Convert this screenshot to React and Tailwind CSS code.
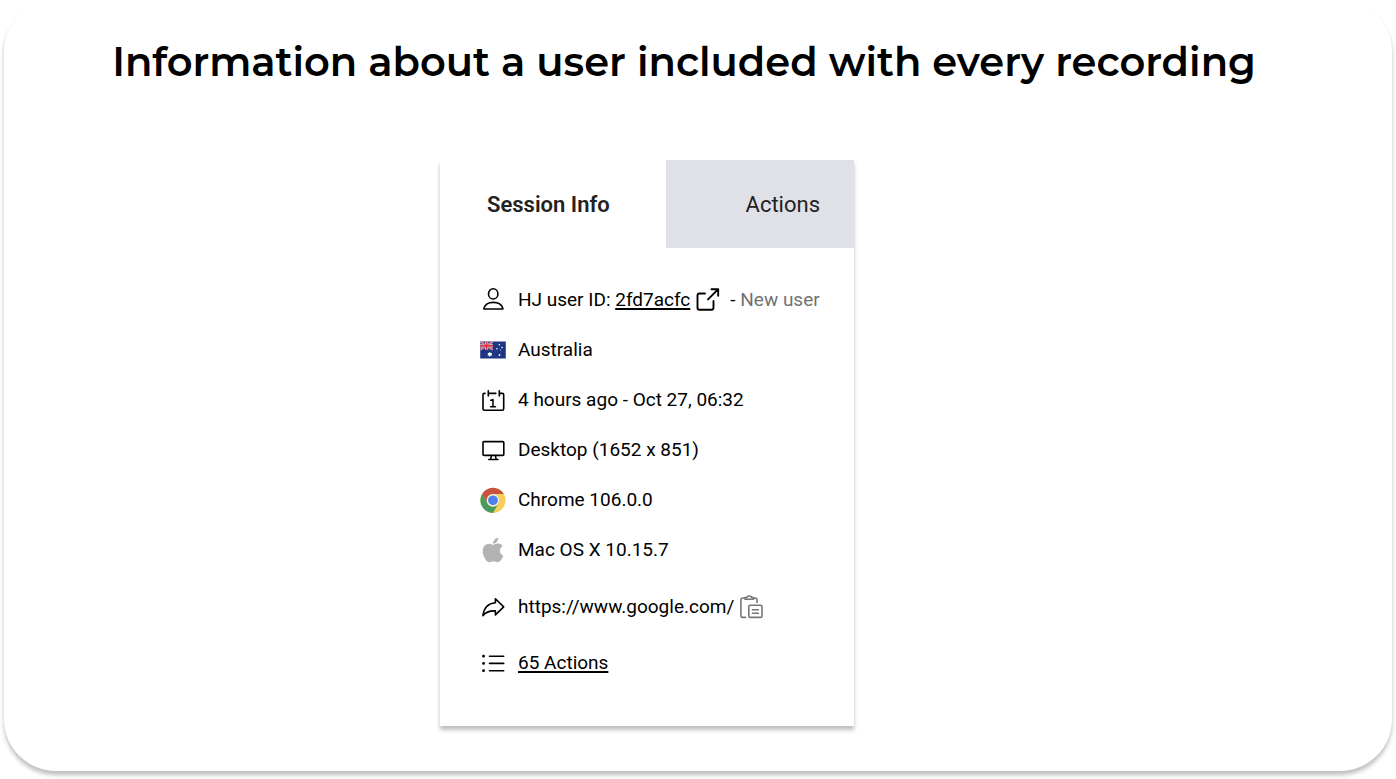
import { FaApple } from "react-icons/fa";

function Icon({ children, color = "text-black" }) {
  return (
    <svg
      viewBox="0 0 26 26"
      aria-hidden="true"
      className={`size-[26px] shrink-0 ${color}`}
      fill="none"
      stroke="currentColor"
      strokeWidth="1.6"
      strokeLinecap="round"
      strokeLinejoin="round"
    >
      {children}
    </svg>
  );
}

const UserIcon = () => (
  <Icon>
    <ellipse cx="13.2" cy="6.9" rx="4.7" ry="5.1" />
    <path d="M3.9 22v-.6C5 17.600 8.700 15.400 13.200 15.400S21.800 17.600 22.900 21.400v.6Z" />
  </Icon>
);

const FlagIcon = () => (
  <Icon>
    <g stroke="none">
      <path fill="#1e3584" d="M.2 4.500h25.600v17H.2z" />
      <path stroke="#e8b9c4" strokeWidth="1.800" strokeLinecap="butt" d="m.4 4.700 12.400 8M12.800 4.700l-12.400 8" />
      <path stroke="#e8c9d2" strokeWidth="3.200" strokeLinecap="butt" d="M6.600 4.500v8.600M.2 8.800h12.800" />
      <path stroke="#d33a4c" strokeWidth="1.700" strokeLinecap="butt" d="M6.600 4.500v8.600M.2 8.800h12.800" />
      <path stroke="#d33a4c" strokeWidth=".7" strokeLinecap="butt" d="m.4 4.700 12.400 8M12.800 4.700l-12.400 8" />
      <g fill="#fff">
        <path d="m9.800 14.800.8 1.300 1.600-.2-.8 1.400.8 1.400-1.600-.2-.8 1.400-.8-1.400-1.600.2.8-1.400-.8-1.400 1.600.2z" />
        <circle cx="19.400" cy="7.700" r=".8" />
        <circle cx="16.900" cy="11.700" r=".8" />
        <circle cx="22" cy="10.500" r=".8" />
        <circle cx="19.500" cy="18" r=".9" />
        <circle cx="20.700" cy="13.100" r=".5" />
      </g>
    </g>
  </Icon>
);

const CalendarIcon = () => (
  <Icon>
    <path d="M5 6.400H4.300Q3 6.400 3 7.700v14Q3 23.300 4.600 23.300h17.600Q23.700 23.300 23.700 21.700v-14Q23.700 6.400 22.400 6.400H19.400M8.300 6.400h7.500M8.300 3.700V9M19.300 3.700V9" />
    <path strokeWidth="1.500" d="M10.800 13.200 13 12.600v7.200M10.600 19.800h4.900" />
  </Icon>
);

const MonitorIcon = () => (
  <Icon>
    <rect x="3" y="4.600" width="20.800" height="13.800" rx="1" />
    <path d="M11.300 18.600c0 2-.3 3.300-1.300 3.900M15.500 18.600c0 2 .3 3.300 1.300 3.900M8.800 22.500h9.200" />
  </Icon>
);

const ChromeIcon = () => (
  <Icon>
    <g stroke="none">
      <circle cx="13" cy="13.300" r="12.600" fill="#f6cf5a" />
      <path fill="#c95140" d="M2.100 7A12.600 12.600 0 0 1 23.900 7H13a6.300 6.300 0 0 0-5.500 9.400z" />
      <path fill="#459a5f" d="M2.100 7A12.600 12.600 0 0 0 13 25.900l5.500-9.400A6.300 6.300 0 0 1 7.500 16.400z" />
      <circle cx="13" cy="13.300" r="6.100" fill="#f5f5f5" />
      <circle cx="13" cy="13.300" r="4.900" fill="#4d82ea" />
    </g>
  </Icon>
);

const ShareIcon = () => (
  <Icon>
    <path d="M15.400 4.700 23.700 12.900 15.400 20.900V16.900C9.500 16.600 5.600 18 2.900 21.700 3.900 14 8 9.200 15.400 8.700Z" />
  </Icon>
);

const ListIcon = () => (
  <Icon>
    <path d="M9.500 6.200h14.200M9.500 13.400h14.200M9.500 20.700h14.200" />
    <path strokeWidth="2.800" d="M3.500 6.200h.1M3.500 13.400h.1M3.500 20.700h.1" />
  </Icon>
);

const ExternalIcon = () => (
  <Icon>
    <path strokeWidth="1.900" d="M11 6.500H5.500Q3.500 6.500 3.500 8.500v12.300q0 2 2 2h12q2 0 2-2V14M17.500 2.200h6.700v6.600M24 2.400 14 12.400" />
  </Icon>
);

const PasteIcon = () => (
  <Icon color="text-[#777777]">
    <path d="M7.500 23.400H4.900Q2.900 23.400 2.900 21.400V6Q2.900 4 4.900 4H7M15.600 4h1.600q1.800 0 1.800 2v2.500M7 5.300V3.500h1.800Q9.200 2 11.300 2t2.500 1.500h1.800v1.800ZM12.200 11.200h10.400q1.400 0 1.400 1.400v9.400q0 1.400-1.400 1.400H12.200q-1.400 0-1.400-1.400v-9.400q0-1.400 1.400-1.400ZM14.400 15.700h6M14.400 19.200h6" />
  </Icon>
);

function Row({ icon, tall, children }) {
  return (
    <li className={`flex items-center gap-3 ${tall ? "h-14" : "h-[50px]"}`}>
      {icon}
      <div className="flex items-center whitespace-nowrap">{children}</div>
    </li>
  );
}

const link = "underline decoration-2 underline-offset-2";

export default function App() {
  return (
    <div className="min-h-screen bg-white px-1 pb-2 font-['Roboto','Liberation_Sans',sans-serif]">
      <main className="flex min-h-[771px] flex-col items-center rounded-[52px] bg-white pt-8 pb-[45px] shadow-[0_4px_4px_rgba(0,0,0,0.25)]">
        <h1 className="pr-7 text-center font-['Montserrat','Inter',sans-serif] text-[40px] leading-[60px] font-semibold text-black">
          Information about a user included with every recording
        </h1>
        <div className="mt-[68px] flex w-full justify-center pr-[102px]">
          <section className="w-full max-w-[414px] bg-white shadow-[0_4px_4px_rgba(0,0,0,0.25)]">
            <div role="tablist" className="flex h-[88px] text-[22px] text-[#222222]">
              <button
                type="button"
                role="tab"
                aria-selected="true"
                className="flex-1 pl-[47px] text-left font-semibold"
              >
                Session Info
              </button>
              <button
                type="button"
                role="tab"
                aria-selected="false"
                className="w-[188px] bg-[#e0e1e6] pr-[34px] text-right"
              >
                Actions
              </button>
            </div>
            <div role="tabpanel" className="px-10 pt-[27px] pb-[35px] text-[19px] leading-6 text-black">
              <ul>
                <Row icon={<UserIcon />}>
                  <span>HJ user ID:&nbsp;</span>
                  <a href="#user" className={link}>2fd7acfc</a>
                  <a href="#open" aria-label="Open user" className="ml-1">
                    <ExternalIcon />
                  </a>
                  <span className="ml-[10px]">-&nbsp;</span>
                  <span className="text-[#727272]">New user</span>
                </Row>
                <Row icon={<FlagIcon />}>Australia</Row>
                <Row icon={<CalendarIcon />}>4 hours ago - Oct 27, 06:32</Row>
                <Row icon={<MonitorIcon />}>Desktop (1652 x 851)</Row>
                <Row icon={<ChromeIcon />}>Chrome 106.0.0</Row>
                <Row icon={<FaApple aria-hidden="true" className="h-7 w-[26px] shrink-0 text-[#b3b3b3]" />}>
                  Mac OS X 10.15.7
                </Row>
              </ul>
              <ul className="pt-1">
                <Row tall icon={<ShareIcon />}>
                  <span>https://www.google.com/</span>
                  <button type="button" aria-label="Copy URL" className="ml-1">
                    <PasteIcon />
                  </button>
                </Row>
                <Row tall icon={<ListIcon />}>
                  <a href="#actions" className={link}>65 Actions</a>
                </Row>
              </ul>
            </div>
          </section>
        </div>
      </main>
    </div>
  );
}
